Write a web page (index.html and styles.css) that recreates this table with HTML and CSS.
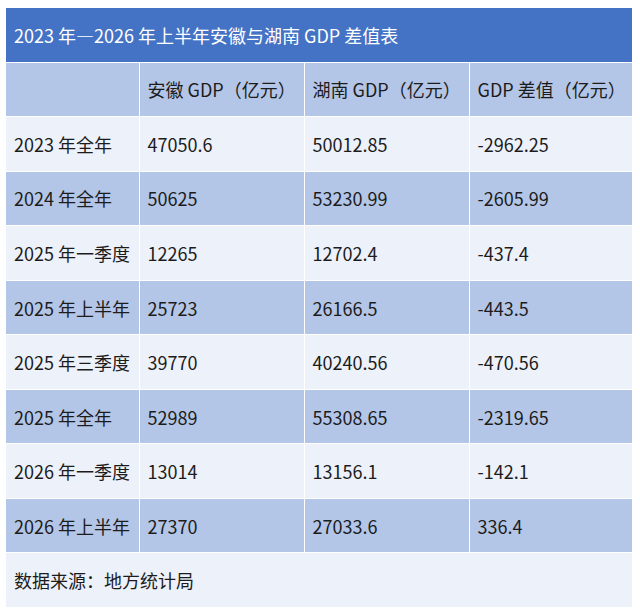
FILE: index.html
```html
<!DOCTYPE html>
<html lang="zh-CN">
<head>
<meta charset="utf-8">
<title>GDP 差值表</title>
<link rel="stylesheet" href="styles.css">
</head>
<body>
<table class="gdp">
  <colgroup>
    <col class="c1"><col class="c2"><col class="c3"><col class="c4">
  </colgroup>
  <tr class="title"><td colspan="4">2023 年—2026 年上半年安徽与湖南 GDP 差值表</td></tr>
  <tr class="blue"><td></td><td>安徽 GDP（亿元）</td><td>湖南 GDP（亿元）</td><td>GDP 差值（亿元）</td></tr>
  <tr class="light"><td>2023 年全年</td><td>47050.6</td><td>50012.85</td><td>-2962.25</td></tr>
  <tr class="blue"><td>2024 年全年</td><td>50625</td><td>53230.99</td><td>-2605.99</td></tr>
  <tr class="light"><td>2025 年一季度</td><td>12265</td><td>12702.4</td><td>-437.4</td></tr>
  <tr class="blue"><td>2025 年上半年</td><td>25723</td><td>26166.5</td><td>-443.5</td></tr>
  <tr class="light"><td>2025 年三季度</td><td>39770</td><td>40240.56</td><td>-470.56</td></tr>
  <tr class="blue"><td>2025 年全年</td><td>52989</td><td>55308.65</td><td>-2319.65</td></tr>
  <tr class="light"><td>2026 年一季度</td><td>13014</td><td>13156.1</td><td>-142.1</td></tr>
  <tr class="blue"><td>2026 年上半年</td><td>27370</td><td>27033.6</td><td>336.4</td></tr>
  <tr class="light"><td colspan="4">数据来源：地方统计局</td></tr>
</table>
</body>
</html>
```

FILE: styles.css
```css
html, body {
  margin: 0;
  padding: 0;
  background: #ffffff;
}
body {
  padding: 8px 0 0 6px;
  font-family: "Noto Sans CJK SC", "Noto Sans", sans-serif;
  color: #1c1c1c;
}
.gdp {
  border-collapse: collapse;
  table-layout: fixed;
  width: 626px;
  font-size: 18px;
}
.c1 { width: 133px; }
.c2 { width: 165px; }
.c3 { width: 165px; }
.c4 { width: 163px; }
.gdp td {
  height: 53.55px;
  padding: 0 0 0 8px;
  border: 1px solid #ffffff;
  vertical-align: middle;
  white-space: nowrap;
  line-height: 1;
}
.gdp tr:first-child td { border-top: none; }
.gdp tr td:first-child { border-left: none; }
.gdp tr td:last-child { border-right: none; }
.gdp tr:last-child td { border-bottom: none; }
.title td {
  background: #4472c4;
  color: #ffffff;
}
.blue td { background: #b4c6e7; }
.light td { background: #edf1fa; }
```
